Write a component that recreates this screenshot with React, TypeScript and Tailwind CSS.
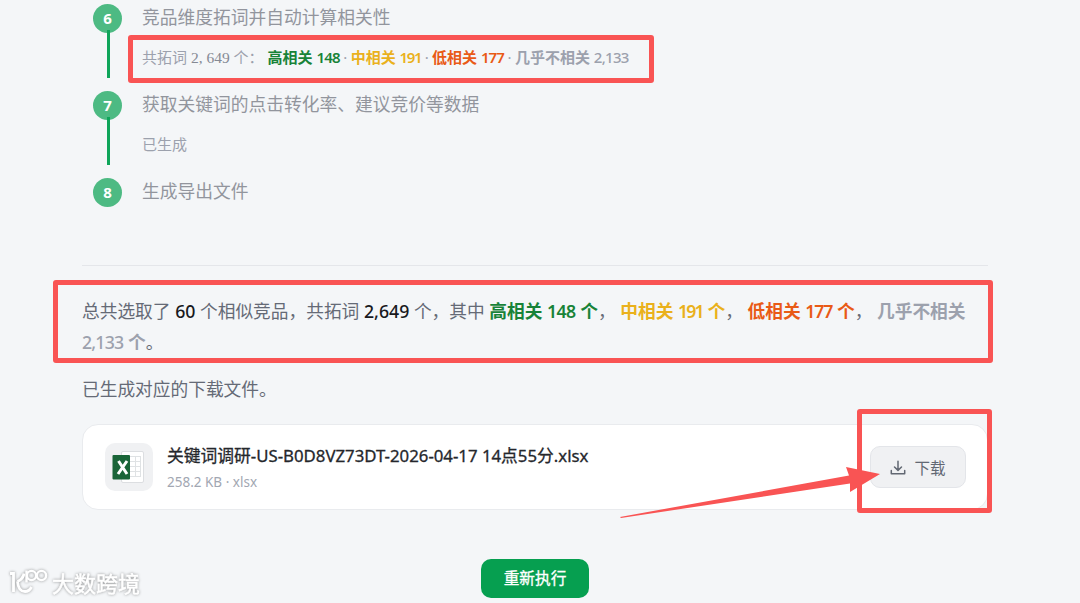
import type { ReactNode } from "react";

type StepProps = {
  index: number;
  title: string;
  last?: boolean;
  children?: ReactNode;
};

const Step = ({ index, title, last, children }: StepProps) => {
  return (
    <li className="flex h-[87px] gap-[20px]">
      <div className="flex w-[29px] shrink-0 flex-col items-center">
        <span className="flex h-[29px] w-[29px] shrink-0 items-center justify-center rounded-full bg-[#4dba83] text-[15px] leading-none font-bold text-white">
          {index}
        </span>
        {!last && <span className="relative left-[1px] -mt-[3px] h-[48px] w-[3px] bg-[#0ea55a]" />}
      </div>
      <div className="whitespace-nowrap">
        <h3 className="-mt-[1px] h-[28px] text-[17.75px] leading-[28px] text-[#92959d]">{title}</h3>
        <div className="mt-[14px] h-[24px] text-[15px] leading-[24px] text-[#9ca1ad]">{children}</div>
      </div>
    </li>
  );
};

const ExcelIcon = () => (
  <svg width="34" height="34" viewBox="0 0 34 34">
    <rect x="9.5" y="1.5" width="22" height="31" rx="1.5" fill="#fff" stroke="#dcdee1" />
    <path d="M18 6.5h10M18 11.5h10M18 16.5h10M18 21.5h10M18 26.5h10M23.5 6v21M28.500 6v21" stroke="#dfe2e4" fill="none" />
    <rect x="0.5" y="5" width="17.5" height="24.5" rx="1" fill="#1a6538" />
    <path d="M6.500 11l8.500 13M15 11l-9 13" stroke="#fff" strokeWidth="3" fill="none" />
  </svg>
);

const DownloadIcon = () => (
  <svg width="16" height="16" viewBox="0 0 16 16" fill="none" stroke="#626873" strokeWidth="1.5" strokeLinecap="round" strokeLinejoin="round">
    <path d="M8 1.2v9M4.5 7L8 10.4 11.5 7M1.3 10.5v3.3h13.4v-3.3" />
  </svg>
);

const Watermark = () => (
  <div className="absolute top-[567px] left-[9px] flex items-center gap-[3px] whitespace-nowrap text-white drop-shadow-[0_0_1.5px_rgba(0,0,0,0.4)]">
    <svg width="40" height="32" viewBox="0 0 40 32" fill="none" stroke="currentColor" strokeWidth="2.8">
      <path d="M1 6.500h3.500V25M15 6.500C14.500 10 12 13 8.500 14.500M8.500 14.500C9 21 12 24.500 16 24.500c3 0 5-1.500 6.500-4.500" />
      <path d="M17.500 3.500v12" strokeWidth="2.4" />
      <circle cx="22.500" cy="8.500" r="4.600" strokeWidth="2.4" />
      <circle cx="32.500" cy="8.500" r="4.600" strokeWidth="2.4" />
    </svg>
    <span className="text-[22px] leading-[32px] font-normal [-webkit-text-stroke:0.5px_white]">大数跨境</span>
  </div>
);

const App = () => {
  return (
    <div className="relative h-[603px] w-[1080px] overflow-hidden bg-[#f4f6f8] font-['Noto_Sans','Noto_Sans_CJK_SC',sans-serif]">
      <main className="flex flex-col pr-[92px] pl-[82px]">
        <ol className="h-[265px] pt-[4px] pl-[11px]">
          <Step index={6} title="竞品维度拓词并自动计算相关性">
            共拓词 <span className="font-['Liberation_Serif'] text-[15.5px] text-[#858994]">2, 649</span> 个：{" "}
            <b className="font-semibold text-[#188338]">
              高相关 <span className="tracking-[-0.8px]">148</span>
            </b>
            <span className="tracking-[-0.3px]"> · </span>
            <b className="font-semibold text-[#eab11c]">
              中相关 <span className="tracking-[-1.4px]">191</span>
            </b>
            <span className="tracking-[-0.3px]"> · </span>
            <b className="font-semibold text-[#e95a16]">
              低相关 <span className="tracking-[-0.9px]">177</span>
            </b>
            <span className="tracking-[-0.3px]"> · </span>
            <b className="font-semibold">
              几乎不相关 <span className="font-medium tracking-[-0.7px]">2,133</span>
            </b>
          </Step>
          <Step index={7} title="获取关键词的点击转化率、建议竞价等数据">
            已生成
          </Step>
          <Step index={8} title="生成导出文件" last />
        </ol>

        <section className="border-t border-[#e4e6ea] pt-[30px] text-[17.72px] leading-[31px] text-[#656a76]">
          <p className="whitespace-nowrap">
            总共选取了 <b className="font-medium text-[#18191d]">60</b> 个相似竞品，共拓词{" "}
            <b className="font-medium text-[#18191d]">2,649</b> 个，其中{" "}
            <b className="font-semibold text-[#188338]">
              高相关 <span className="tracking-[-0.6px]">148</span> 个
            </b>
            ，{" "}
            <b className="font-semibold text-[#eab11c]">
              中相关 <span className="tracking-[-1.8px]">191</span> 个
            </b>
            ，{" "}
            <b className="font-semibold text-[#e95a16]">
              低相关 <span className="tracking-[-1.1px]">177</span> 个
            </b>
            ，{" "}
            <b className="font-semibold text-[#9ca1ad]">
              几乎不相关
              <br />
              <span className="font-medium tracking-[-0.8px]">2,133</span> 个
            </b>
            。
          </p>
          <p className="mt-[16px]">已生成对应的下载文件。</p>
        </section>

        <div className="mt-[19px] flex h-[86px] items-center rounded-2xl border border-[#e9ebee] bg-white pr-[21px] pl-[22px]">
          <div className="flex h-[48px] w-[48px] items-center justify-center rounded-[10px] bg-[#f0f1f3]">
            <ExcelIcon />
          </div>
          <div className="ml-[14px] flex-1 pt-[2px] whitespace-nowrap">
            <div className="text-[16.77px] leading-[28px] text-[#25272c] [-webkit-text-stroke:0.3px_#25272c]">
              关键词调研-US-B0D8VZ73DT-2026-04-17 14点55分.xlsx
            </div>
            <div className="text-[13.5px] leading-[24px] text-[#a2a7b2]">258.2 KB · xlsx</div>
          </div>
          <button className="flex h-[42px] w-[96px] items-center justify-center gap-[8px] rounded-[10px] border border-[#e3e5e9] bg-[#f0f1f3] pt-[2px] text-[15.5px] text-[#626873]">
            <DownloadIcon />
            <span className="pt-[2px]">下载</span>
          </button>
        </div>

        <button className="mt-[49px] h-[39px] w-[108px] self-center rounded-[10px] bg-[#069f50] pt-[1px] text-[15.7px] text-white [-webkit-text-stroke:0.3px_white]">
          重新执行
        </button>
      </main>

      <div className="absolute top-[35px] left-[128px] h-[48px] w-[526px] rounded-[3px] border-5 border-[#f95454]" />
      <div className="absolute top-[280px] left-[53px] h-[83px] w-[940px] rounded-[3px] border-5 border-[#f95454]" />
      <div className="absolute top-[409px] left-[857px] h-[104px] w-[135px] rounded-[3px] border-5 border-[#f95454]" />
      <svg className="absolute top-[460px] left-[615px]" width="270" height="65" viewBox="615 460 270 65">
        <path d="M620 517L849 475.500L846 467L880 474L850 492V483.500L621 518Z" fill="#f95454" />
      </svg>

      <Watermark />
    </div>
  );
};

export default App;
